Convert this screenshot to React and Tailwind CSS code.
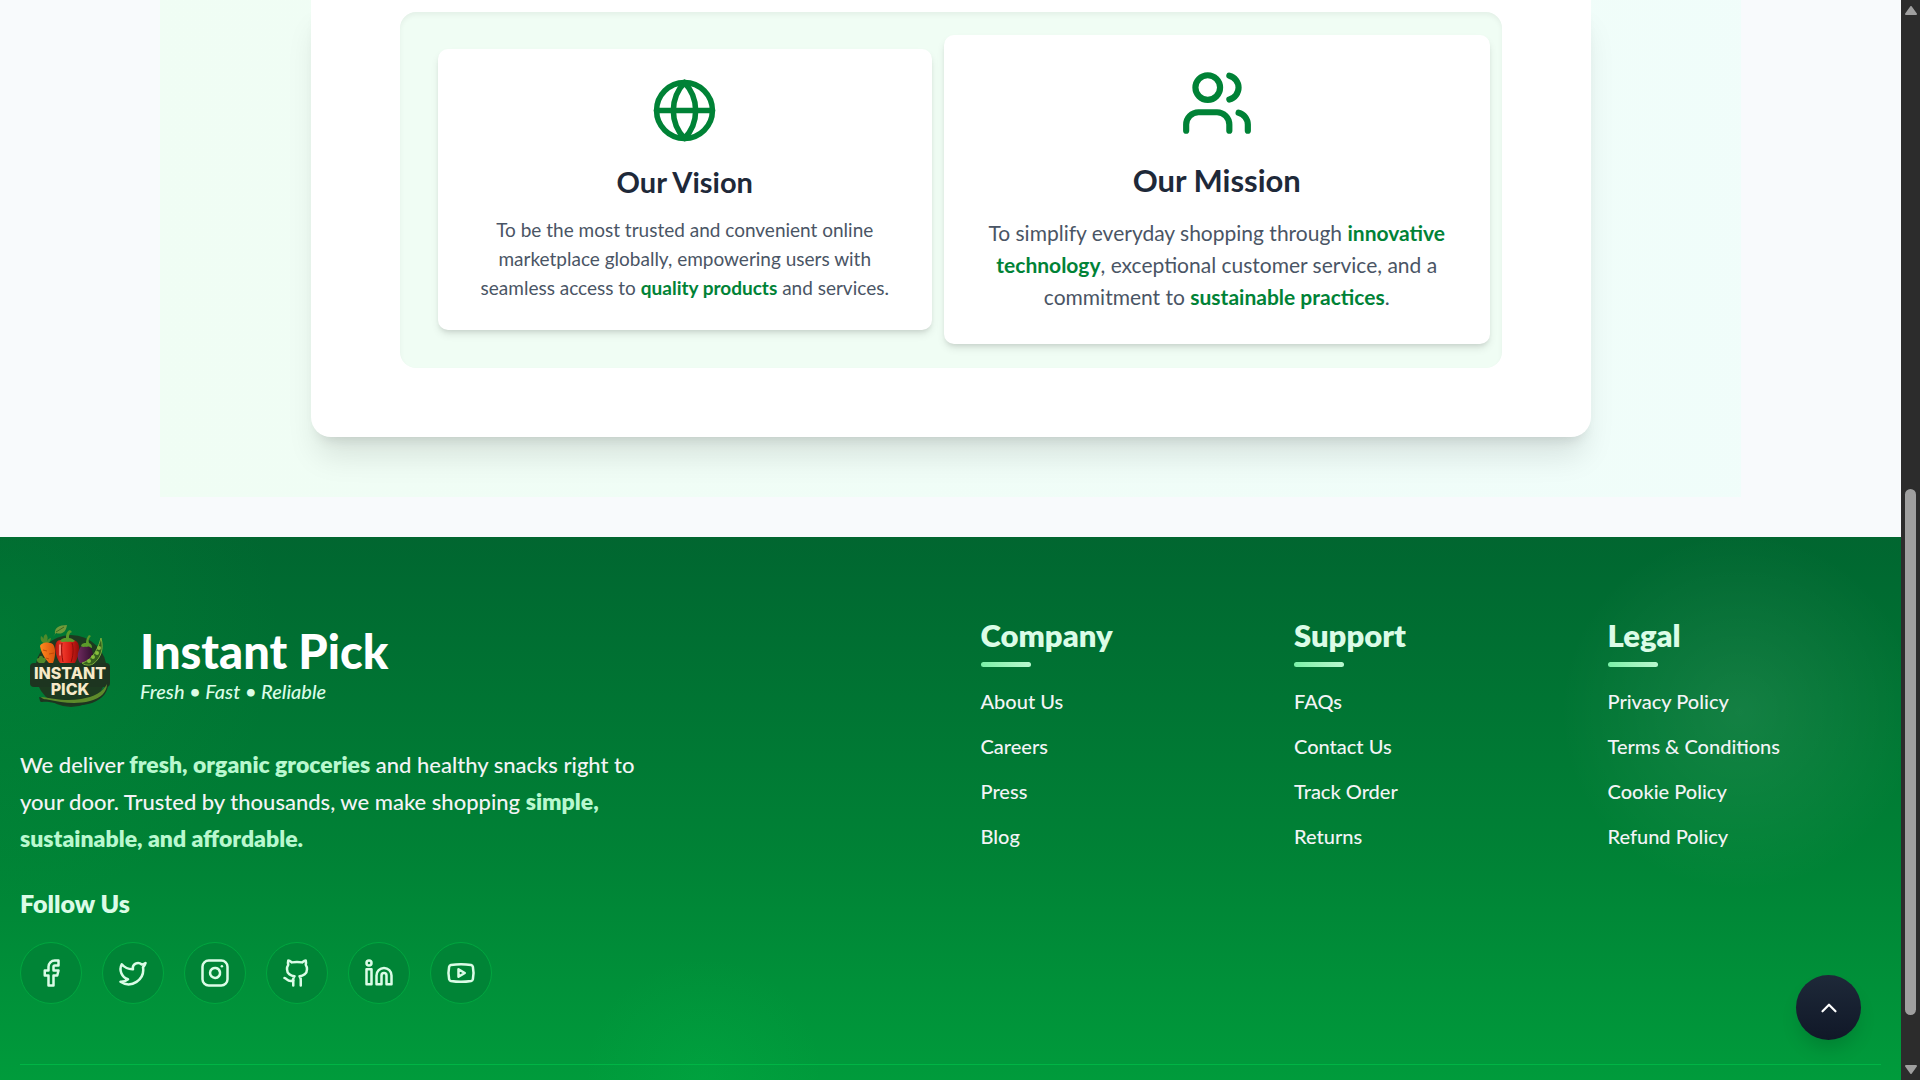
import React from "react";
import {
  ChevronUp,
  Facebook,
  Github,
  Globe,
  Instagram,
  Linkedin,
  Twitter,
  Users,
  Youtube,
} from "lucide-react";

const columns = [
  { title: "Company", links: ["About Us", "Careers", "Press", "Blog"] },
  { title: "Support", links: ["FAQs", "Contact Us", "Track Order", "Returns"] },
  {
    title: "Legal",
    links: ["Privacy Policy", "Terms & Conditions", "Cookie Policy", "Refund Policy"],
  },
];

const socials = [
  { name: "Facebook", Icon: Facebook },
  { name: "Twitter", Icon: Twitter },
  { name: "Instagram", Icon: Instagram },
  { name: "GitHub", Icon: Github },
  { name: "LinkedIn", Icon: Linkedin },
  { name: "YouTube", Icon: Youtube },
];

function Logo() {
  return (
    <svg viewBox="0 0 100 100" className="size-[100px] shrink-0" role="img" aria-label="Instant Pick logo">
      <defs>
        <linearGradient id="carrot" x1="0" x2="1">
          <stop offset="0" stopColor="#ff8a1e" />
          <stop offset="1" stopColor="#d9540c" />
        </linearGradient>
        <linearGradient id="pepper" x1="0" x2="1">
          <stop offset="0" stopColor="#b3120c" />
          <stop offset="0.3" stopColor="#f0392b" />
          <stop offset="0.6" stopColor="#d81f17" />
          <stop offset="1" stopColor="#8f0d0a" />
        </linearGradient>
        <linearGradient id="eggplant" x1="0" x2="1">
          <stop offset="0" stopColor="#6d2a5e" />
          <stop offset="1" stopColor="#34102f" />
        </linearGradient>
      </defs>
      <circle cx="51" cy="54" r="36" fill="#1d3a20" />
      <rect x="10" y="46" width="80" height="24" rx="4" fill="#1d3520" />
      <path d="M19 46c-3-2-3-5 0-5 0-3 4-3 4 0 3-1 4 3 1 5z" fill="#4f8a2a" />
      <path d="M35 17c-1-6 4-9 12-9-1 7-5 10-11 8l-3 4z" fill="#6f9a3a" />
      <path d="M36 15l8-5" stroke="#3f6b22" strokeWidth="1" fill="none" />
      <path d="M25 27c-4-2-5-5-4-8 2 1 3 3 3 5-1-4 0-6 2-7 2 2 2 5 1 7 1-2 3-3 4-3 0 3-2 5-5 6z" fill="#4f8a2a" />
      <path d="M20 29c1-4 12-5 14 0 2 5 1 12-1 17h-4c-4-4-8-11-9-17z" fill="url(#carrot)" />
      <path d="M23 33l4 1m7 2l-5 1m-3 4l3 1" stroke="#c24a08" strokeWidth="1" />
      <path d="M36 26c2-4 7-3 10-2 3-1 9-2 12 2 3 6 0 15-3 20H40c-4-6-6-14-4-20z" fill="url(#pepper)" />
      <path d="M42 26c-1 6 0 14 1 19m9-19c2 6 1 14-1 19" stroke="#8f0d0a" strokeWidth="1" fill="none" />
      <path d="M40 28v10" stroke="#ff9a8c" strokeWidth="1.500" strokeLinecap="round" />
      <path d="M40 24c2-3 4-3 6-3 0-4 1-7 4-8l2 2c-3 1-3 4-3 6 2 0 4 1 6 3-3 2-4 0-7 1-3-1-5 1-8-1z" fill="#5b9a2a" />
      <path d="M60 31c2-4 8-4 11 0 3 5 2 11-2 15h-9c-3-4-3-10 0-15z" fill="url(#eggplant)" />
      <path d="M61 29c1-3 3-3 5-3 0-3 1-6 3-8l2 1c-2 2-3 4-2 7 2 1 3 2 3 5-3-1-3-2-5-1-2-1-3 1-6-1z" fill="#5b9a2a" />
      <path d="M81 21c3 11 0 20-8 26-4 2-9 1-11-1 8-2 15-10 19-25z" fill="#35601e" />
      <path d="M81 21c3 11 0 20-8 26-4 2-9 1-11-1 8-2 15-10 19-25z" fill="none" stroke="#79ad3a" strokeWidth="1" />
      <g fill="#86bb3d">
        <circle cx="79" cy="31" r="2" />
        <circle cx="77" cy="36" r="2" />
        <circle cx="73" cy="40" r="2" />
        <circle cx="69" cy="44" r="2" />
      </g>
      <path d="M19 80c8 2 24 5 42 2 14-2 23-8 27-17 1 9-5 17-16 21-14 5-32 1-43-1-5-1-8 1-9-1z" fill="#1d3520" />
      <path d="M21 80c10 1 24 5 40 2 13-2 22-7 26-15 0 8-6 14-17 17-15 4-30 1-40-1-4-1-7 0-9-3z" fill="#5d8a2b" />
      <text x="50" y="62" textAnchor="middle" fontFamily="Inter, sans-serif" fontWeight="800" fontSize="16" fill="#f6e9c8">
        INSTANT
        <tspan x="50" y="78">
          PICK
        </tspan>
      </text>
    </svg>
  );
}

function Scrollbar() {
  return (
    <div aria-hidden="true" className="flex w-[19px] shrink-0 flex-col items-center bg-[#2c2c2c] py-1.5">
      <svg viewBox="0 0 12 10" className="h-2.5 w-3 shrink-0">
        <path d="M6 1L11 8H1z" fill="#9f9f9f" stroke="#9f9f9f" strokeWidth="2" strokeLinejoin="round" />
      </svg>
      <div className="grow-[473]" />
      <div className="w-[11px] grow-[526] rounded-full bg-[#9f9f9f]" />
      <div className="grow-[49]" />
      <svg viewBox="0 0 12 10" className="h-2.5 w-3 shrink-0">
        <path d="M6 9L11 2H1z" fill="#9f9f9f" stroke="#9f9f9f" strokeWidth="2" strokeLinejoin="round" />
      </svg>
    </div>
  );
}

function Purpose() {
  return (
    <section className="bg-slate-50 px-40 pb-10">
      <div className="bg-linear-to-r from-green-50 to-teal-50 pb-[60px]">
        <div className="mx-auto max-w-7xl rounded-b-[20px] bg-white px-[89px] pt-3 pb-[69px] shadow-[0_25px_31px_-6px_rgba(0,0,0,0.1),0_10px_13px_-8px_rgba(0,0,0,0.12)]">
          <div className="grid grid-cols-[494fr_545fr] items-center gap-3 rounded-2xl bg-green-50 pt-[23px] pr-3 pb-6 pl-[38px] shadow-[inset_0_3px_5px_rgba(0,0,0,0.05)]">
            <article className="flex flex-col items-center rounded-[10px] bg-white px-8 py-7 text-center shadow-[0_5px_8px_-1px_rgba(0,0,0,0.1),0_3px_5px_-2px_rgba(0,0,0,0.1)]">
              <Globe className="size-[67px] text-green-700" />
              <h3 className="mt-5 text-[29px] leading-9 font-bold text-gray-800">Our Vision</h3>
              <p className="mt-[15px] text-[19px] leading-[29px] text-gray-600">
                To be the most trusted and convenient online
                <br />
                marketplace globally, empowering users with
                <br />
                seamless access to{" "}
                <strong className="font-bold text-green-700">quality products</strong> and services.
              </p>
            </article>
            <article className="flex flex-col items-center rounded-[10px] bg-white px-8 py-[31px] text-center shadow-[0_5px_8px_-1px_rgba(0,0,0,0.1),0_3px_5px_-2px_rgba(0,0,0,0.1)]">
              <Users className="size-[74px] text-green-700" />
              <h3 className="mt-5 text-[31px] leading-10 font-bold text-gray-800">Our Mission</h3>
              <p className="mt-[17px] text-[21px] leading-8 text-gray-600">
                To simplify everyday shopping through{" "}
                <strong className="font-bold text-green-700">
                  innovative
                  <br />
                  technology
                </strong>
                , exceptional customer service, and a
                <br />
                commitment to{" "}
                <strong className="font-bold text-green-700">sustainable practices</strong>.
              </p>
            </article>
          </div>
        </div>
      </div>
    </section>
  );
}

function Footer() {
  return (
    <footer className="relative bg-linear-to-b from-green-800 via-green-700 to-green-600 px-5 pt-20">
      <div className="pointer-events-none absolute inset-0 bg-[radial-gradient(circle_at_0px_90px,rgba(0,166,62,0.18),transparent_280px),radial-gradient(circle_at_91.5%_175px,rgba(255,255,255,0.08),transparent_180px),radial-gradient(circle_at_37%_540px,rgba(0,201,80,0.14),transparent_120px)]" />
      <div className="relative grid grid-cols-2 gap-[60px] border-b border-[#00b545] pb-[60px]">
        <div>
          <div className="flex items-center gap-5">
            <Logo />
            <div className="pb-1">
              <h2 className="text-[47px] leading-[52px] font-black text-white">Instant Pick</h2>
              <p className="text-[20px] leading-7 font-medium text-green-100 italic">
                Fresh • Fast • Reliable
              </p>
            </div>
          </div>
          <p className="mt-[29px] text-[22px] leading-[37px] font-medium text-gray-100">
            We deliver{" "}
            <strong className="text-[23px] font-extrabold text-green-200">fresh, organic groceries</strong>{" "}
            and healthy snacks right to
            <br />
            your door. Trusted by thousands, we make shopping{" "}
            <strong className="text-[23px] font-extrabold text-green-200">
              simple,
              <br />
              sustainable, and affordable.
            </strong>
          </p>
          <h4 className="mt-[30px] text-[25px] leading-8 font-extrabold text-green-100">Follow Us</h4>
          <div className="mt-[23px] flex gap-5">
            {socials.map(({ name, Icon }) => (
              <a
                key={name}
                href="#"
                aria-label={name}
                className="flex size-[62px] items-center justify-center rounded-full border border-green-600 bg-[#008436] text-green-100"
              >
                <Icon className="size-[30px]" />
              </a>
            ))}
          </div>
        </div>
        <nav className="grid grid-cols-3 items-start gap-10">
          {columns.map(({ title, links }) => (
            <div key={title}>
              <h3 className="text-[31px] leading-9 font-extrabold text-green-100">{title}</h3>
              <div className="mt-[9px] h-[5px] w-[50px] rounded-full bg-linear-to-r from-green-300 to-green-200" />
              <ul className="mt-[22px] flex flex-col gap-5 text-[20px] leading-[25px] font-medium text-gray-100">
                {links.map((link) => (
                  <li key={link}>
                    <a href="#">{link}</a>
                  </li>
                ))}
              </ul>
            </div>
          ))}
        </nav>
      </div>
      <div className="h-[110px]" />
    </footer>
  );
}

export default function App() {
  return (
    <div className="flex h-screen font-['Lato',sans-serif]">
      <main className="relative min-w-0 flex-1 overflow-hidden">
        <Purpose />
        <Footer />
        <button
          type="button"
          aria-label="Back to top"
          className="absolute right-10 bottom-10 flex size-[65px] items-center justify-center rounded-full bg-linear-to-b from-gray-800 to-gray-900 text-white shadow-[0_12px_19px_-4px_rgba(0,0,0,0.15)]"
        >
          <ChevronUp className="size-[26px]" />
        </button>
      </main>
      <Scrollbar />
    </div>
  );
}
